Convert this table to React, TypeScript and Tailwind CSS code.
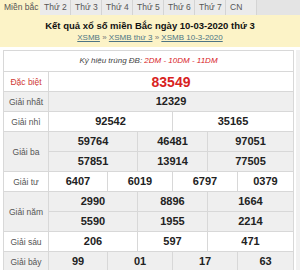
const tabs = ["Thứ 2", "Thứ 3", "Thứ 4", "Thứ 5", "Thứ 6", "Thứ 7", "CN"];

function Label({ text, red, grey, span }: { text: string; red?: boolean; grey?: boolean; span?: boolean }) {
  return (
    <div
      className={`flex items-center justify-center overflow-hidden text-[8.5px] leading-[10px] ${red ? "text-[#d03a35]" : "text-[#555]"} ${
        grey ? "bg-[#efefef]" : "bg-white"
      } ${span ? "row-span-2" : ""}`}
    >
      {text}
    </div>
  );
}

function Num({ value, cls, grey }: { value: string; cls: string; grey?: boolean }) {
  return (
    <div
      className={`flex items-center justify-center overflow-hidden text-[11px] font-bold leading-[13px] text-[#222] ${
        grey ? "bg-[#efefef]" : "bg-white"
      } ${cls}`}
    >
      {value}
    </div>
  );
}

export default function App() {
  return (
    <div className="h-[270px] w-[300px] overflow-hidden bg-white font-['Liberation_Sans',Arial,sans-serif]">
      <div className="flex h-[15px] overflow-hidden bg-[#e4e4e4] leading-[15px]">
        <div className="w-[40px] bg-[#fcf3c7] pl-[4px] text-[8.5px] whitespace-nowrap text-[#555]">Miền bắc</div>
        {tabs.map((t) => (
          <div
            key={t}
            className="w-[31px] border-r border-[#d4d4d4] bg-[#ebebeb] pl-[4px] text-[8.5px] whitespace-nowrap text-[#555]"
          >
            {t}
          </div>
        ))}
      </div>

      <div className="flex h-[32px] flex-col items-center justify-center overflow-hidden bg-[#fcf3c7]">
        <div className="text-[9.5px] font-bold leading-[12px] whitespace-nowrap text-[#111]">
          Kết quả xổ số miền Bắc ngày 10-03-2020 thứ 3
        </div>
        <div className="text-[8px] leading-[11px] whitespace-nowrap text-[#777]">
          <span className="text-[#4d7585] underline">XSMB</span> »{" "}
          <span className="text-[#4d7585] underline">XSMB thứ 3</span> »{" "}
          <span className="text-[#4d7585] underline">XSMB 10-3-2020</span>
        </div>
      </div>

      <div className="flex pt-[3px]">
        <div className="ml-[3px] grid w-[291px] grid-cols-[44px_58px_29px_34px_34px_29px_55px] grid-rows-[20px_repeat(10,19px)] gap-px border border-[#d8d8d8] bg-[#d8d8d8]">
          <div className="col-span-7 flex items-center justify-center overflow-hidden bg-white text-[8px] leading-[10px] italic text-[#444]">
            Ký hiệu trúng ĐB:&nbsp;<span className="text-[#d8231f]">2DM - 10DM - 11DM</span>
          </div>

          <Label text="Đặc biệt" red />
          <div className="col-span-6 flex items-center justify-center overflow-hidden bg-white text-[14px] font-bold leading-[16px] text-[#d8231f]">
            83549
          </div>

          <Label text="Giải nhất" grey />
          <Num value="12329" cls="col-span-6" grey />

          <Label text="Giải nhì" />
          <Num value="92542" cls="col-span-3" />
          <Num value="35165" cls="col-span-3" />

          <Label text="Giải ba" grey span />
          <Num value="59764" cls="col-span-2" grey />
          <Num value="46481" cls="col-span-2" grey />
          <Num value="97051" cls="col-span-2" grey />
          <Num value="57851" cls="col-span-2" grey />
          <Num value="13914" cls="col-span-2" grey />
          <Num value="77505" cls="col-span-2" grey />

          <Label text="Giải tư" />
          <Num value="6407" cls="" />
          <Num value="6019" cls="col-span-2" />
          <Num value="6797" cls="col-span-2" />
          <Num value="0379" cls="" />

          <Label text="Giải năm" grey span />
          <Num value="2990" cls="col-span-2" grey />
          <Num value="8896" cls="col-span-2" grey />
          <Num value="1664" cls="col-span-2" grey />
          <Num value="5590" cls="col-span-2" grey />
          <Num value="1955" cls="col-span-2" grey />
          <Num value="2214" cls="col-span-2" grey />

          <Label text="Giải sáu" />
          <Num value="206" cls="col-span-2" />
          <Num value="597" cls="col-span-2" />
          <Num value="471" cls="col-span-2" />

          <Label text="Giải bảy" grey />
          <Num value="99" cls="" grey />
          <Num value="01" cls="col-span-2" grey />
          <Num value="17" cls="col-span-2" grey />
          <Num value="63" cls="" grey />
        </div>
        <div className="ml-[2px] h-[230px] flex-1 bg-[#f1f1f1]" />
      </div>
    </div>
  );
}
